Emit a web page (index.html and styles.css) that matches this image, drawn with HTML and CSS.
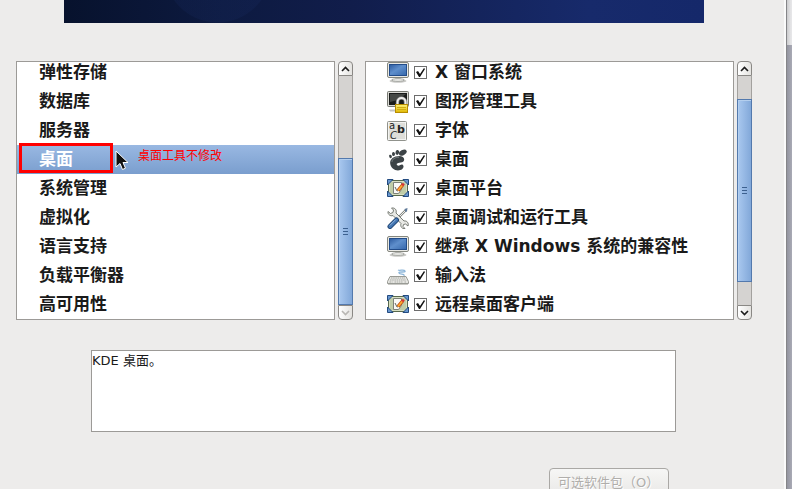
FILE: index.html
```html
<!DOCTYPE html>
<html lang="zh-CN">

<head>
    <meta charset="utf-8">
    <title>软件包选择</title>
    <link rel="stylesheet" href="styles.css">
</head>

<body>
    <!-- shared icons -->
    <svg class="defs" aria-hidden="true">
        <defs>
            <linearGradient id="screenBlue" x1="0" y1="0" x2="1" y2="1">
                <stop offset="0" stop-color="#2c5ba0" />
                <stop offset=".45" stop-color="#5f8fcc" />
                <stop offset="1" stop-color="#3567ab" />
            </linearGradient>
            <linearGradient id="gold" x1="0" y1="0" x2="0" y2="1">
                <stop offset="0" stop-color="#fff37a" />
                <stop offset="1" stop-color="#dfb600" />
            </linearGradient>
        </defs>
        <symbol id="i-screen" viewBox="0 0 22 22">
            <ellipse cx="11" cy="19" rx="8.5" ry="1.7" fill="#c9c9c6" />
            <path d="M8 15h6v2.5H8z" fill="#d8d8d5" />
            <ellipse cx="11" cy="18" rx="6.5" ry="1.3" fill="#f2f2ef" stroke="#8d8f8a" stroke-width=".7" />
            <rect x=".5" y=".5" width="21" height="15" rx="1.5" fill="#e9e9e4" stroke="#85877f" />
            <rect x="2.5" y="2.5" width="17" height="11" fill="url(#screenBlue)" stroke="#224c8a" />
        </symbol>
        <symbol id="i-lock" viewBox="0 0 22 22">
            <path d="M2 18.5h9v2H3z" fill="#c4c4c1" />
            <rect x=".5" y=".5" width="21" height="15" rx="1" fill="#d9d9d4" stroke="#777972" />
            <rect x="2" y="2" width="18" height="12" fill="#191b1a" />
            <path d="M3 3h16l-8 6-8 2z" fill="#454845" />
            <path d="M10.5 15v-4a4 4 0 0 1 8 0v4" fill="none" stroke="#777" stroke-width="3.4" />
            <path d="M10.5 15v-4a4 4 0 0 1 8 0v4" fill="none" stroke="#eeeeec" stroke-width="2" />
            <rect x="8.5" y="13.5" width="12" height="8" fill="url(#gold)" stroke="#b78c00" />
            <path d="M10 16.5h9M10 18.5h9" stroke="#d0ad12" />
        </symbol>
        <symbol id="i-foot" viewBox="0 0 22 22">
            <g fill="#3c4346">
                <ellipse cx="15.8" cy="3.6" rx="4.2" ry="2.6" transform="rotate(-28 15.8 3.6)" />
                <ellipse cx="10.3" cy="3.4" rx="1.8" ry="2.5" transform="rotate(12 10.3 3.4)" />
                <ellipse cx="6.5" cy="5" rx="1.5" ry="2.1" transform="rotate(-8 6.5 5)" />
                <ellipse cx="3.5" cy="7.4" rx="1.3" ry="1.8" transform="rotate(-25 3.5 7.4)" />
                <path d="M12.5 7C7 7 2.6 10 3.2 14.5c.4 3.8 4 7 7.8 7 3.3 0 5.8-2 5.5-4.2-.2-2-2-2.3-3.3-1.2-1.8 1.2-4 .2-3.4-1.3.7-1.7 7.4-.3 7.4-4.4C17.2 8.3 15 7 12.5 7z" />
            </g>
            <path d="M5 13c0-3 3-4.7 7-4.7" fill="none" stroke="#80888a" stroke-width=".8" />
        </symbol>
        <symbol id="i-desk" viewBox="0 0 22 22">
            <rect x="1.5" y="2.5" width="19" height="15" fill="#d6dec2" stroke="#59694c" />
            <rect x="3" y="4" width="16" height="12" fill="#c0cda8" />
            <path d="M6.5 4.5h8v7l-3 4h-5z" fill="#fafaf7" stroke="#7d8178" />
            <path d="M8 9l2 4 3-1" fill="none" stroke="#62665d" />
            <path d="M11 12.5l5-6" stroke="#bf4b10" stroke-width="3.4" />
            <path d="M11 12.5l5-6" stroke="#ffad35" stroke-width="1.8" />
            <path d="M15.2 7.5l1.6-2" stroke="#d73535" stroke-width="2.6" />
            <path d="M.5 1.5H6L.5 7zM21.5 1.5H16L21.5 7zM.5 18.5H6L.5 13zM21.5 18.5H16l5.5-5.5z" fill="#6796ce" stroke="#234b80" />
        </symbol>
        <symbol id="i-tools" viewBox="0 0 22 22">
            <path d="M11 11l8-8" stroke="#7f837e" stroke-width="2.4" />
            <path d="M11 11l8-8" stroke="#eceeea" />
            <path d="M17.5 2l3-1-.5 3.5-1.5.5z" fill="#5d7898" />
            <path d="M1 4.5l2.5 2 2.5-1 .5-2.5-2-2C8 .5 10 3 9 6l8 8c3-.5 5 2 4 5l-2.5-2-2 .5-.5 2 2 2c-3 .6-5-2-4-5L6 8.5C3.5 9.5.5 7.5 1 4.5z" fill="#e8e9e5" stroke="#777b74" />
            <path d="M3 19.5l6.5-6.5" stroke="#1d416f" stroke-width="5" stroke-linecap="round" />
            <path d="M3 19.5l6.5-6.5" stroke="#4375b1" stroke-width="3.2" stroke-linecap="round" />
            <path d="M2.8 18.5l6-6" stroke="#9dbfe5" stroke-width=".9" />
        </symbol>
        <symbol id="i-keys" viewBox="0 0 22 22">
            <path d="M17 11c1-3-4-1-5-3s7 0 6-2-5 0-7-1" fill="none" stroke="#8db6d9" stroke-width="1.3" />
            <path d="M3 11.5h16l2.5 5v2H.5v-2z" fill="#e6e6e2" stroke="#999b95" />
            <path d="M4 13h14M3 15h16M2.5 17h3m2 0h8m2 0h2" stroke="#a9aba6" stroke-dasharray="1.5 .7" />
            <path d="M1 19.5h20" stroke="#c9c9c5" />
        </symbol>
    </svg>

    <div class="window">
        <main class="dialog">
            <div class="banner"></div>

            <div class="panes">
                <div class="pane pane-groups">
                    <ul class="list groups">
                        <li>弹性存储</li>
                        <li>数据库</li>
                        <li>服务器</li>
                        <li class="selected">桌面
                            <span class="mark"></span>
                            <svg class="pointer" viewBox="0 0 14 21">
                                <path d="M1 1v16l4-3.5 2.5 6 3-1.3L8 12.5h5z" fill="#111" stroke="#fff" />
                            </svg>
                            <span class="note">桌面工具不修改</span>
                        </li>
                        <li>系统管理</li>
                        <li>虚拟化</li>
                        <li>语言支持</li>
                        <li>负载平衡器</li>
                        <li>高可用性</li>
                    </ul>
                    <div class="scroll scroll-end">
                        <button class="arrow up" type="button" aria-label="向上"><svg viewBox="0 0 9 6"><path d="M1 5l3.5-3.5L8 5" /></svg></button>
                        <div class="track"><div class="thumb"><i></i><i></i><i></i></div></div>
                        <button class="arrow down" type="button" aria-label="向下" disabled><svg viewBox="0 0 9 6"><path d="M1 1l3.5 3.5L8 1" /></svg></button>
                    </div>
                </div>

                <div class="pane pane-packages">
                    <ul class="list packages">
                        <li><label><svg class="icon"><use href="#i-screen" /></svg><input type="checkbox" checked>X 窗口系统</label></li>
                        <li><label><svg class="icon"><use href="#i-lock" /></svg><input type="checkbox" checked>图形管理工具</label></li>
                        <li>
                            <label>
                                <svg class="icon" viewBox="0 0 22 22" aria-hidden="true">
                                    <rect x=".5" y="1.5" width="19" height="19" rx="1" fill="#f3f3f1" stroke="#90928c" />
                                    <rect x="2" y="3" width="16" height="16" fill="#deded9" />
                                    <text x="2" y="9" class="glyph">a</text>
                                    <text x="10" y="13" class="glyph glyph-b">b</text>
                                    <text x="3" y="19" class="glyph glyph-c">C</text>
                                </svg><input type="checkbox" checked>字体</label>
                        </li>
                        <li><label><svg class="icon"><use href="#i-foot" /></svg><input type="checkbox" checked>桌面</label></li>
                        <li><label><svg class="icon"><use href="#i-desk" /></svg><input type="checkbox" checked>桌面平台</label></li>
                        <li><label><svg class="icon"><use href="#i-tools" /></svg><input type="checkbox" checked>桌面调试和运行工具</label></li>
                        <li><label><svg class="icon"><use href="#i-screen" /></svg><input type="checkbox" checked>继承 X Windows 系统的兼容性</label></li>
                        <li><label><svg class="icon"><use href="#i-keys" /></svg><input type="checkbox" checked>输入法</label></li>
                        <li><label><svg class="icon"><use href="#i-desk" /></svg><input type="checkbox" checked>远程桌面客户端</label></li>
                    </ul>
                    <div class="scroll scroll-middle">
                        <button class="arrow up" type="button" aria-label="向上"><svg viewBox="0 0 9 6"><path d="M1 5l3.5-3.5L8 5" /></svg></button>
                        <div class="track"><div class="thumb"><i></i><i></i><i></i></div></div>
                        <button class="arrow down" type="button" aria-label="向下"><svg viewBox="0 0 9 6"><path d="M1 1l3.5 3.5L8 1" /></svg></button>
                    </div>
                </div>
            </div>

            <div class="details">
                <textarea class="description" aria-label="说明" readonly>KDE 桌面。</textarea>
                <button class="optional" type="button" disabled>可选软件包（O）</button>
            </div>
        </main>
        <div class="edge"></div>
    </div>
</body>

</html>
```
FILE: styles.css
```css
* {
    box-sizing: border-box;
}

body {
    margin: 0;
    background: #edeceb;
    color: #1a1a1a;
    font-family: "DejaVu Sans", "Noto Sans CJK SC", sans-serif;
    font-size: 13px;
}

.defs {
    position: absolute;
    width: 0;
    height: 0;
}

.window {
    display: flex;
    height: 100vh;
    overflow: hidden;
}

.dialog {
    flex: 1;
    min-width: 0;
}

/* right hand frame of the window */
.edge {
    width: 8px;
    border-left: 2px solid #fafafa;
    background:
        linear-gradient(to right, #858588 1px, transparent 1px),
        linear-gradient(to right, #c4c4c6, #e6e6e8 5px) 0 0 / 100% 45px no-repeat,
        linear-gradient(to right, #8f909b, #a9aab5);
}

.banner {
    height: 23px;
    margin: 0 80px 38px 64px;
    background:
        radial-gradient(circle at 24% -31px, rgba(32, 55, 120, .14) 53px, transparent 54px),
        linear-gradient(to right, #07122d, #0d1a40 25%, #111d4b 45%, #14245c 65%, #172a6b 82%, #15286a);
}

.panes {
    display: flex;
    gap: 12px;
    padding: 0 32px 0 16px;
}

.pane {
    display: flex;
    gap: 3px;
    min-width: 0;
}

.pane-groups {
    flex: 337;
}

.pane-packages {
    flex: 387;
}

.list {
    flex: 1;
    min-width: 0;
    margin: 0;
    padding: 0;
    list-style: none;
    overflow: hidden;
    border: 1px solid #9c9a97;
    background: #fff;
    font-size: 17px;
    font-weight: bold;
    line-height: 29px;
    white-space: nowrap;
}

/* list is scrolled a little, first row is cut */
.list li:first-child {
    margin-top: -4px;
}

.list li {
    height: 29px;
}

.groups li {
    padding-left: 22px;
}

.groups .selected {
    position: relative;
    color: #fff;
    background: linear-gradient(#99b8e2, #7a9ece);
}

.mark {
    position: absolute;
    left: 2px;
    top: -2px;
    width: 94px;
    height: 30px;
    border: 3px solid #f00;
}

.pointer {
    position: absolute;
    left: 98px;
    top: 5px;
    width: 14px;
    height: 21px;
}

.note {
    position: absolute;
    left: 121px;
    top: 0;
    color: #f00;
    font-size: 12px;
    font-weight: normal;
    line-height: 22px;
}

.packages label {
    display: flex;
    align-items: center;
    height: 29px;
    padding-left: 21px;
}

.icon {
    flex: none;
    width: 22px;
    height: 22px;
    margin-right: 5px;
}

.glyph {
    fill: #222;
    font-family: "DejaVu Sans", sans-serif;
    font-size: 10px;
    font-weight: normal;
}

.glyph-b {
    font-size: 11px;
    font-weight: bold;
}

.glyph-c {
    font-style: italic;
}

.packages input {
    appearance: none;
    flex: none;
    width: 13px;
    height: 13px;
    margin: 0 8px 0 0;
    border: 1px solid #6d6d6d;
    background: #fff;
}

.packages input:checked::before {
    content: "";
    display: block;
    height: 11px;
    background: #111;
    clip-path: polygon(1px 5px, 3px 4px, 5px 7px, 9px 1px, 10px 2px, 5px 10px, 4px 10px);
}

.scroll {
    display: flex;
    flex-direction: column;
    width: 15px;
}

.arrow {
    display: flex;
    align-items: center;
    justify-content: center;
    height: 15px;
    padding: 0;
    border: 1px solid #8a8885;
    background: linear-gradient(to right, #fff, #e4e3e0);
}

.up {
    border-radius: 4px 4px 0 0;
}

.down {
    border-radius: 0 0 4px 4px;
}

.arrow svg {
    width: 9px;
    height: 6px;
    fill: none;
    stroke: #1a1a1a;
    stroke-width: 1.6;
}

.arrow:disabled svg {
    stroke: #b8b6b3;
}

.track {
    display: flex;
    flex: 1;
    flex-direction: column;
    border: solid #a3a19e;
    border-width: 0 1px;
    background: #d5d3d1;
}

.thumb {
    display: flex;
    flex-direction: column;
    align-items: center;
    justify-content: center;
    gap: 2px;
    margin: 0 -1px;
    border: 1px solid #5379ad;
    background: linear-gradient(to right, #a9c8ef, #82a8d9);
    box-shadow: inset 1px 1px #b4cfee;
}

.thumb i {
    width: 5px;
    height: 1px;
    background: #3c608f;
}

.scroll-end .track {
    justify-content: flex-end;
}

.scroll-end .thumb {
    height: 64%;
}

.scroll-middle .thumb {
    height: 80%;
    margin-top: 23px;
}

.details {
    display: flex;
    flex-direction: column;
    padding: 30px 108px 0 91px;
}

.description {
    height: 82px;
    padding: 0;
    border: 1px solid #9c9a97;
    outline: 0;
    background: #fff;
    color: #1a1a1a;
    font: inherit;
    line-height: 19px;
    resize: none;
}

.optional {
    align-self: flex-end;
    width: 120px;
    height: 29px;
    margin: 36px 7px 0 0;
    padding: 0 0 2px 8px;
    border: 1px solid #aaa8a5;
    border-radius: 4px;
    background: linear-gradient(#f6f6f5, #e9e8e6);
    color: #b0aeab;
    font: inherit;
    text-align: left;
    text-shadow: 1px 1px #fff;
    white-space: nowrap;
}
```
